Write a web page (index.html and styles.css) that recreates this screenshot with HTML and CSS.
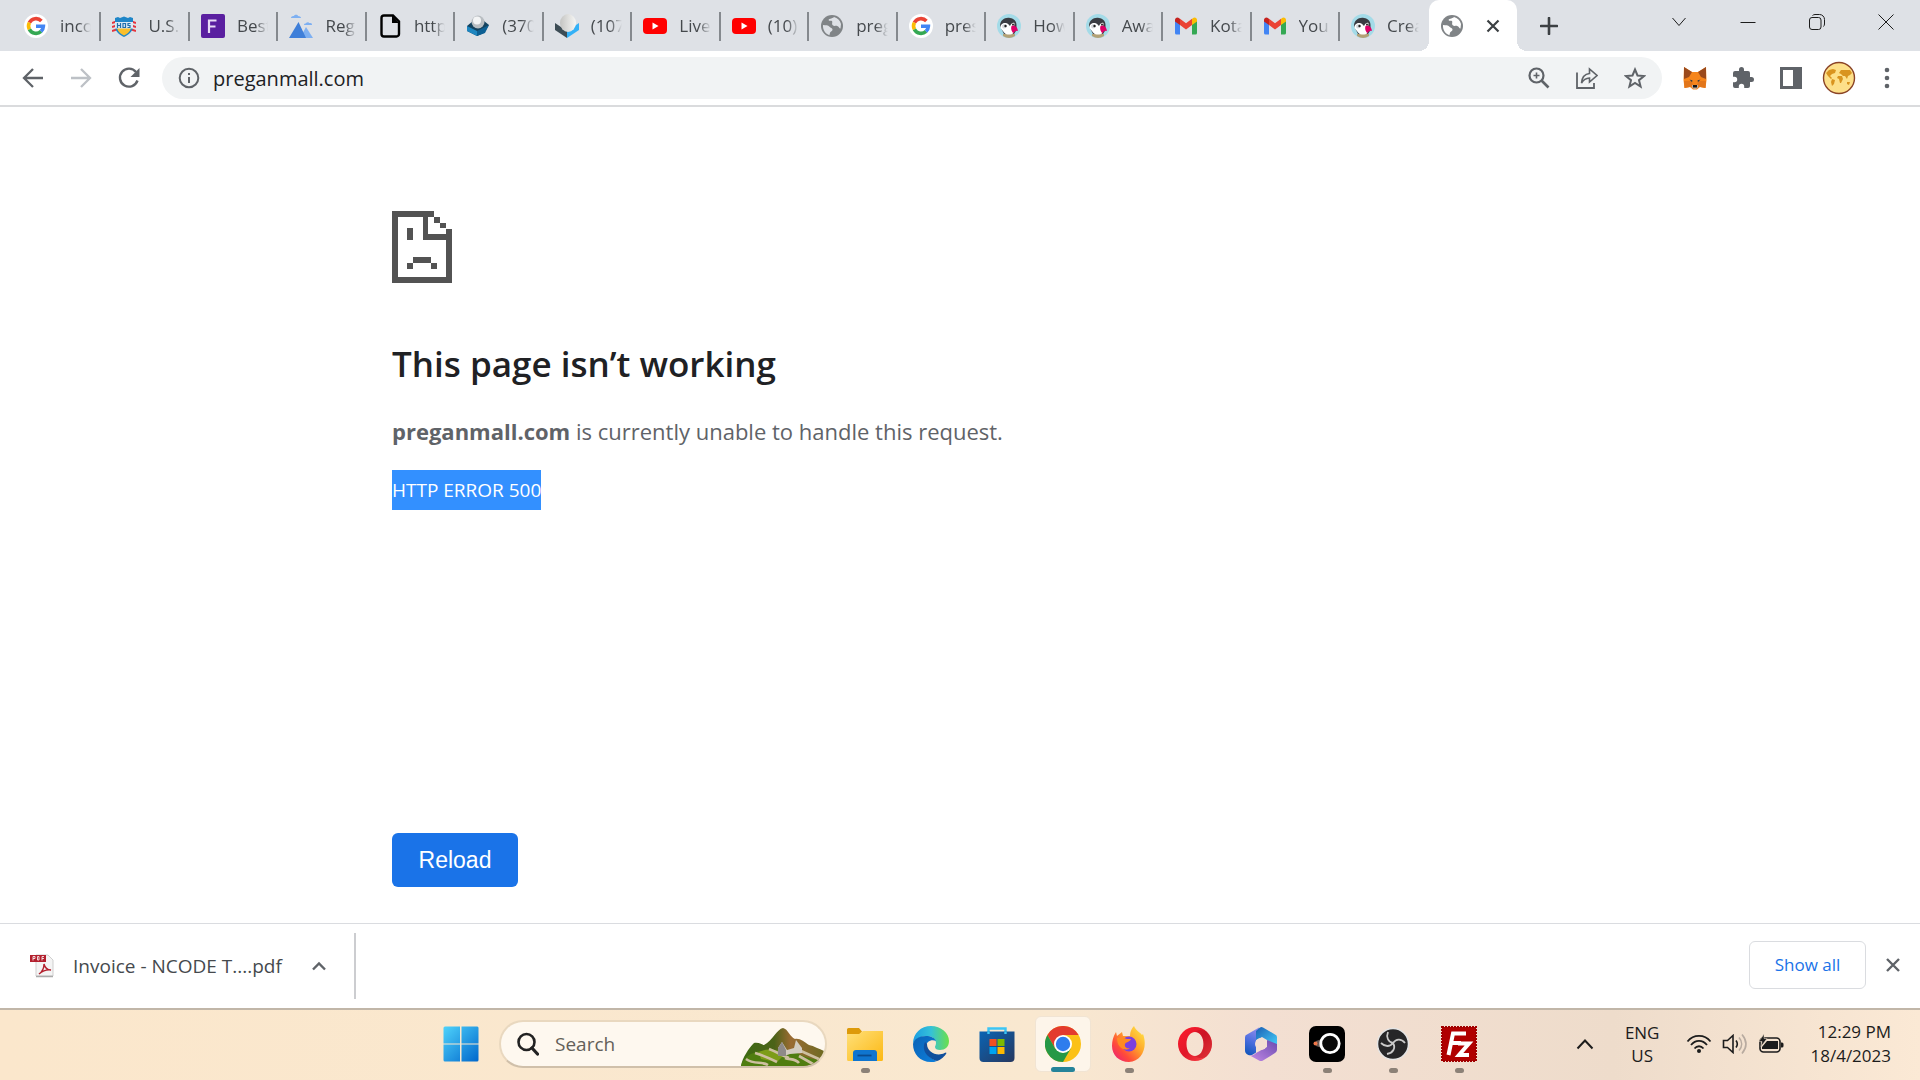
FILE: index.html
```html
<!DOCTYPE html>
<html lang="en">
  <head>
    <meta charset="UTF-8" />
    <meta name="viewport" content="width=device-width, initial-scale=1.0" />
    <title>preganmall.com</title>
    <link rel="stylesheet" href="styles.css">
  </head>
  <body>
    <!-- shared icons -->
    <svg class="defs" width="0" height="0">
      <defs>
        <linearGradient id="win" x1="0" y1="0" x2="1" y2="1">
          <stop offset="0" stop-color="#4fd3fb" />
          <stop offset="1" stop-color="#0067cc" />
        </linearGradient>
        <linearGradient id="folder" x1="0" y1="0" x2="1" y2="1">
          <stop offset="0" stop-color="#ffe07a" />
          <stop offset="1" stop-color="#fcb813" />
        </linearGradient>
        <linearGradient id="edge" x1="0" y1="0" x2="1" y2="0">
          <stop offset="0" stop-color="#1b9de2" />
          <stop offset="0.5" stop-color="#35c1d8" />
          <stop offset="1" stop-color="#6be04a" />
        </linearGradient>
        <linearGradient id="edge2" x1="0" y1="0" x2="1" y2="1">
          <stop offset="0" stop-color="#0a62b5" />
          <stop offset="1" stop-color="#0d7fdc" />
        </linearGradient>
        <linearGradient id="store" x1="0" y1="0" x2="1" y2="1">
          <stop offset="0" stop-color="#0a64b4" />
          <stop offset="1" stop-color="#27385f" />
        </linearGradient>
        <linearGradient id="fire" x1="1" y1="0" x2="0" y2="1">
          <stop offset="0" stop-color="#fff04a" />
          <stop offset="0.4" stop-color="#ffa62b" />
          <stop offset="0.7" stop-color="#ff4a3a" />
          <stop offset="1" stop-color="#e6158a" />
        </linearGradient>
        <linearGradient id="opera" x1="0" y1="0" x2="1" y2="1">
          <stop offset="0" stop-color="#ff1b2d" />
          <stop offset="0.5" stop-color="#e0182a" />
          <stop offset="1" stop-color="#ff4b4b" />
        </linearGradient>
        <linearGradient id="office1" x1="0.6" y1="0" x2="0.3" y2="1">
          <stop offset="0" stop-color="#8f8bea" />
          <stop offset="0.5" stop-color="#4d6fe0" />
          <stop offset="1" stop-color="#1457bd" />
        </linearGradient>
        <linearGradient id="office2" x1="0" y1="0" x2="1" y2="1">
          <stop offset="0" stop-color="#1a5fb4" />
          <stop offset="1" stop-color="#45d0fb" />
        </linearGradient>
        <linearGradient id="office3" x1="0" y1="1" x2="1" y2="0">
          <stop offset="0" stop-color="#c48ae6" />
          <stop offset="1" stop-color="#6a4bb0" />
        </linearGradient>
        <linearGradient id="hill" x1="0" y1="0" x2="1" y2="0">
          <stop offset="0" stop-color="#3d6b12" />
          <stop offset="0.4" stop-color="#4b6218" />
          <stop offset="0.6" stop-color="#9a6b32" />
          <stop offset="1" stop-color="#6e6a22" />
        </linearGradient>
        <linearGradient id="ball" x1="0" y1="0" x2="1" y2="0">
          <stop offset="0" stop-color="#c4c4c2" />
          <stop offset="0.5" stop-color="#dededc" />
          <stop offset="1" stop-color="#f6f6f4" />
        </linearGradient>
      </defs>
      <symbol id="google" viewBox="0 0 24 24">
        <circle cx="12" cy="12" r="12" fill="#fff" />
        <g fill="none" stroke-width="3.6">
          <path d="M5.4 8.6A7.4 7.4 0 0 1 17.4 7" stroke="#ea4335" />
          <path d="M5.4 15.4a7.4 7.4 0 0 1 0-6.8" stroke="#fbbc05" />
          <path d="M17 17.4a7.4 7.4 0 0 1-11.6-2" stroke="#34a853" />
          <path d="M12 12.2h7.4a7.4 7.4 0 0 1-2.4 5.2" stroke="#4285f4" />
        </g>
      </symbol>
      <symbol id="globe" viewBox="0 0 24 24">
        <circle cx="12" cy="12" r="11" fill="#808487" />
        <path d="M3 11c3 .4 5 0 6.500 1.800 1 1.400 2.800 1 3 2.600.2 1.800-2.300 1.800-2.500 3.600l-.6 2.200C5.500 20 2.600 16 3 11zM14 3c3.400.8 6.200 3.500 7 7l-.5 4.500c-1.500-.2-1.700-2.200-3.300-2.600-1.500-.4-3.200.6-4.400-.6-1.500-1.600.2-3.300-.9-4.300-1-.9-2.600.4-3.200-.8C8.200 4.600 12 5 14 3z" fill="var(--tab-bg)" />
      </symbol>
      <symbol id="youtube" viewBox="0 0 24 24">
        <rect x="0" y="4" width="24" height="16" rx="4" fill="#f00" />
        <path d="M9.500 8.500v7l6-3.500z" fill="#fff" />
      </symbol>
      <symbol id="gmail" viewBox="0 0 24 24">
        <path d="M1 6v13a1.500 1.500 0 0 0 1.500 1.500H6V10z" fill="#4285f4" />
        <path d="M23 6v13a1.500 1.500 0 0 1-1.500 1.500H18V10z" fill="#34a853" />
        <path d="M6 5v6L1 7.500V6c0-2.500 2.500-3.300 4-2z" fill="#c5221f" />
        <path d="M18 5v6l5-3.500V6c0-2.500-2.500-3.300-4-2z" fill="#fbbc04" />
        <path d="M6 4.800v6.200l6 4.500 6-4.500V4.800l-6 4.500z" fill="#ea4335" />
      </symbol>
      <symbol id="presta" viewBox="0 0 24 24">
        <circle cx="12" cy="12" r="12" fill="#a4dbe8" />
        <path d="M6 20h12v2c-4 2.500-8 2.500-12 0z" fill="#b3a176" />
        <path d="M3 12C3 6 8 3 13 4c4 .6 6.500 3 6.500 7v5L17 20H7z" fill="#3a3c42" />
        <path d="M3.500 14c-.5-4 3-5.500 5.500-5 2 .4 3 2 4 3 1-2 2.500-4 4.500-3l-1 10c-2 2-7 2-9 0z" fill="#fff" />
        <path d="M5 11.500c2-2 4-1.500 5 .5 0 2-3 3-4.500 2z" fill="#d5d8dc" />
        <path d="M14.500 12c3-1.500 6 1 6.500 5-2-.5-4 .5-4.500 2.500-2-2-3-5-2-7.500z" fill="#df0067" />
        <circle cx="8.500" cy="12" r="1.200" fill="#222" />
        <circle cx="16" cy="10.500" r="1" fill="#222" />
      </symbol>
    </svg>

    <div class="browser">
      <header class="tabbar">
        <nav class="tabs">
          <a class="tab" href="#"><svg class="favicon"><use href="#google" /></svg><span>inco</span></a>
          <a class="tab" href="#"><svg class="favicon" viewBox="0 0 24 24">
            <path d="M0 9l6-2M0 13l6-2M0 17l6-2M24 9l-6-2M24 13l-6-2M24 17l-6-2" stroke="#e5343d" stroke-width="2" />
            <path d="M3 4l3-1 2 1 4-1.500L16 4l2-1 3 1v8c0 6-5 9-9 11-4-2-9-5-9-11z" fill="#1f86c8" />
            <path d="M5 14h14c-1 4-4 6-7 7.500C9 20 6 18 5 14z" fill="#f9bf2c" />
            <path d="M3 8h18v6.500H3z" fill="#d9e9f5" />
            <path d="M5.500 9v5M8.500 9v5M5.500 11.500h3M11 9v5M11 9.500h2.500v4H11M18.500 9.500H16v2h2v2h-2.500" fill="none" stroke="#1f6fae" stroke-width="1.200" />
          </svg><span>U.S.</span></a>
          <a class="tab" href="#"><svg class="favicon" viewBox="0 0 24 24">
            <rect width="24" height="24" rx="2" fill="#5a1fa0" />
            <path d="M8 19V6.500h7.500M8 12.500h6.500" fill="none" stroke="#e8dcf6" stroke-width="2.200" />
          </svg><span>Best</span></a>
          <a class="tab" href="#"><svg class="favicon" viewBox="0 0 24 24">
            <path d="M11 24l6-11 7 11z" fill="#7eb0f2" />
            <path d="M0 24L9.500 8 17 24z" fill="#3f7fd9" />
            <path d="M2 4c0-2 3-2 3-2 1-2 4-1 4 0 2 0 3 1 3 2zM15 11c0-2 2-1 2-2 1-1 3-1 3 0 2 0 3 0 3 2z" fill="#7eb0f2" />
          </svg><span>Reg</span></a>
          <a class="tab" href="#"><svg class="favicon" viewBox="0 0 24 24">
            <path d="M6 1.500h9l6 6V20a2.500 2.500 0 0 1-2.500 2.500H6A2.500 2.500 0 0 1 3.500 20V4A2.500 2.500 0 0 1 6 1.500z" fill="none" stroke="#000" stroke-width="2.400" />
            <path d="M14 1v8h7z" />
          </svg><span>http</span></a>
          <a class="tab" href="#"><svg class="favicon" viewBox="0 0 24 24">
            <path d="M1 12l6-5h11l5 4-5 8-7 3-10-5z" fill="#15435f" />
            <path d="M1 12l10 5v5L1 17z" fill="#1e86c0" />
            <path d="M11 17l12-6-4 8-8 3z" fill="#0d6094" />
            <circle cx="12" cy="8" r="6.500" fill="#b9bec2" />
            <circle cx="11" cy="6.500" r="4" fill="#f3f4f5" />
          </svg><span>(370)</span></a>
          <a class="tab" href="#"><svg class="favicon" viewBox="0 0 24 24">
            <path d="M0 9l12 8v7L0 16z" fill="#3c4c55" />
            <path d="M24 9l-12 8v7l12-8z" fill="#33b1f7" />
            <ellipse cx="13" cy="9" rx="8" ry="9" fill="url(#ball)" />
          </svg><span>(107)</span></a>
          <a class="tab" href="#"><svg class="favicon"><use href="#youtube" /></svg><span>Live</span></a>
          <a class="tab" href="#"><svg class="favicon"><use href="#youtube" /></svg><span>(10)</span></a>
          <a class="tab" href="#"><svg class="favicon"><use href="#globe" /></svg><span>preg</span></a>
          <a class="tab" href="#"><svg class="favicon"><use href="#google" /></svg><span>pres</span></a>
          <a class="tab" href="#"><svg class="favicon"><use href="#presta" /></svg><span>How</span></a>
          <a class="tab" href="#"><svg class="favicon"><use href="#presta" /></svg><span>Awa</span></a>
          <a class="tab" href="#"><svg class="favicon"><use href="#gmail" /></svg><span>Kota</span></a>
          <a class="tab" href="#"><svg class="favicon"><use href="#gmail" /></svg><span>You</span></a>
          <a class="tab" href="#"><svg class="favicon"><use href="#presta" /></svg><span>Crea</span></a>
          <div class="tab active">
            <svg class="favicon"><use href="#globe" /></svg>
            <button class="icon-btn" aria-label="Close tab"><svg width="14" height="14" viewBox="0 0 14 14"><path d="M1.500 1.500l11 11M12.500 1.500l-11 11" stroke="#3c4043" stroke-width="2.200" /></svg></button>
          </div>
        </nav>
        <button class="new-tab icon-btn" aria-label="New tab"><svg width="18" height="18" viewBox="0 0 18 18"><path d="M9 1v16M1 9h16" stroke="#3c4043" stroke-width="2.600" stroke-linecap="round" /></svg></button>
        <div class="window-buttons">
          <button class="icon-btn" aria-label="Search tabs"><svg viewBox="0 0 16 16"><path d="M1.500 4l6.500 7.500L14.500 4" /></svg></button>
          <button class="icon-btn" aria-label="Minimize"><svg viewBox="0 0 16 16"><path d="M.5 8.500h15" /></svg></button>
          <button class="icon-btn" aria-label="Restore"><svg viewBox="0 0 16 16"><rect x=".5" y="3.500" width="11.500" height="12" rx="2.500" /><path d="M3.500 1.500C4 1 5 .5 6 .5h4.500a5 5 0 0 1 5 5V10c0 1-.5 2-1 2.500" /></svg></button>
          <button class="icon-btn" aria-label="Close"><svg viewBox="0 0 16 16"><path d="M.5.500l15 15M15.500.500l-15 15" /></svg></button>
        </div>
      </header>

      <div class="toolbar">
        <div class="nav-buttons">
          <button class="icon-btn" aria-label="Back"><svg width="22" height="22" viewBox="0 0 22 22"><path d="M21 11H2.500M11 2l-9 9 9 9" fill="none" stroke="#5f6368" stroke-width="2.300" /></svg></button>
          <button class="icon-btn" aria-label="Forward"><svg width="22" height="22" viewBox="0 0 22 22"><path d="M1 11h18.500M11 2l9 9-9 9" fill="none" stroke="#bdc1c6" stroke-width="2.300" /></svg></button>
          <button class="icon-btn" aria-label="Reload page"><svg width="22" height="22" viewBox="0 0 22 22"><path d="M19.500 13.500a9 9 0 1 1-1.500-8.500" fill="none" stroke="#5f6368" stroke-width="2.400" /><path d="M21.500 1v9h-9z" fill="#5f6368" /></svg></button>
        </div>
        <div class="omnibox">
          <svg width="22" height="22" viewBox="0 0 22 22"><circle cx="11" cy="11" r="9.300" fill="none" stroke="#5f6368" stroke-width="2" /><path d="M11 10v6M11 6v2" stroke="#5f6368" stroke-width="2" /></svg>
          <input type="text" aria-label="Address" value="preganmall.com" />
          <button class="icon-btn" aria-label="Zoom"><svg width="22" height="22" viewBox="0 0 22 22"><circle cx="8.500" cy="8.500" r="7" fill="none" stroke="#5f6368" stroke-width="2.200" /><path d="M13.500 13.500l7 7" stroke="#5f6368" stroke-width="2.600" /><path d="M8.500 5.500v6M5.500 8.500h6" stroke="#5f6368" stroke-width="1.600" /></svg></button>
          <button class="icon-btn" aria-label="Share"><svg width="22" height="22" viewBox="0 0 22 22"><path d="M1 5.500V21h17v-5" fill="none" stroke="#5f6368" stroke-width="1.800" /><path d="M5.500 16c.5-6 3.500-9 8-9.500V2l7.500 6.500-7.500 6.500v-4c-4 .2-6 1.500-8 5z" fill="none" stroke="#5f6368" stroke-width="1.600" /></svg></button>
          <button class="icon-btn" aria-label="Bookmark"><svg width="22" height="22" viewBox="0 0 22 22"><path d="M11 2.500l2.500 6 6.500.5-5 4.200 1.600 6.300L11 16l-5.600 3.500L7 13.200 2 9l6.500-.5z" fill="none" stroke="#5f6368" stroke-width="2" /></svg></button>
        </div>
        <div class="extensions">
          <button class="icon-btn" aria-label="MetaMask"><svg width="24" height="24" viewBox="0 0 24 24">
            <path d="M1 1l8 5h6l8-5 .5 13-1 8-5.500-1-3 2.500h-4L7 21l-5.500 1-1-8z" fill="#f6851b" />
            <path d="M1 1l8 5-3 5-5 2zM23 1l-8 5 3 5 5 2z" fill="#9b4a1c" />
            <path d="M1 15l8 0 1 5-3 1-5.500 1zM23 15l-8 0-1 5 3 1 5.500 1z" fill="#e2761b" />
            <path d="M6.500 13.500l3 1-.5 1.500zM17.500 13.500l-3 1 .5 1.500z" fill="#233447" />
            <path d="M9 19h6v2.500l-2 1.500h-2l-2-1.500z" fill="#c0ad9e" /><path d="M10 19h4v2.500h-4z" fill="#161616" />
          </svg></button>
          <button class="icon-btn" aria-label="Extensions"><svg width="24" height="24" viewBox="0 0 24 24"><path d="M20.500 11H19V7a2 2 0 0 0-2-2h-4V3.500a2.500 2.500 0 0 0-5 0V5H4a2 2 0 0 0-2 2v3.800h1.500a2.700 2.700 0 0 1 0 5.400H2V20a2 2 0 0 0 2 2h3.800v-1.500a2.700 2.700 0 0 1 5.400 0V22H17a2 2 0 0 0 2-2v-4h1.500a2.500 2.500 0 0 0 0-5z" fill="#5f6368" /></svg></button>
          <button class="icon-btn" aria-label="Side panel"><svg width="22" height="22" viewBox="0 0 22 22"><rect x="1.500" y="1.500" width="19" height="19" fill="none" stroke="#5f6368" stroke-width="3" /><path d="M13 1h8v20h-8z" fill="#5f6368" /></svg></button>
          <button class="icon-btn" aria-label="Profile"><svg width="34" height="34" viewBox="0 0 34 34">
            <circle cx="17" cy="17" r="15.500" fill="#fde08a" stroke="#8a4326" stroke-width="1.400" />
            <path d="M4 12l3-3 4-1 3 1-1 3-3 1-2 2 2 2-1 1-3-3zM10 18l3 1-1 4-2 2-1-4zM17 12l2-3 4 0 5 0 2 3-2 2-2 1-1 3-2-3-2 0-2-2zM16 15l4 0 1 3-2 4-1 0-1-4-2-1zM25 21l3 0-1 3-2-1z" fill="#d9941f" />
          </svg></button>
          <button class="icon-btn" aria-label="Menu"><svg width="6" height="22" viewBox="0 0 6 22"><g fill="#5f6368"><circle cx="3" cy="3" r="2.300" /><circle cx="3" cy="11" r="2.300" /><circle cx="3" cy="19" r="2.300" /></g></svg></button>
        </div>
      </div>

      <main class="error-page">
        <svg class="sad-file" viewBox="0 0 60 72" shape-rendering="crispEdges">
          <path d="M0 0h42v6h-6v17h18v-5h6v54H0zM6 6v60h48V29H31V6z" fill="#535353" fill-rule="evenodd" />
          <path d="M42 6h6v6h-6zM48 12h6v5h-6zM15 17h6v12h-6zM21 46h18v6H21zM15 52h6v6h-6zM39 52h6v6h-6z" fill="#535353" />
        </svg>
        <h1>This page isn’t working</h1>
        <p><strong>preganmall.com</strong> is currently unable to handle this request.</p>
        <div class="error-code">HTTP ERROR 500</div>
        <button class="reload">Reload</button>
      </main>

      <footer class="downloads">
        <div class="download">
          <svg width="24" height="24" viewBox="0 0 24 24">
            <path d="M6 1h12l5 5v16H6z" fill="#f4f4f4" stroke="#cfcfcf" />
            <path d="M6 22.500h17" stroke="#aaa" stroke-width="1.500" />
            <rect y="1" width="16" height="7" fill="#b3202e" />
            <path d="M3 6.500v-4h2v2H3M7.500 2.500h1.500v3.500H7.500zM12 6.500v-4h2M12 4.500h2" fill="none" stroke="#fff" stroke-width=".8" />
            <path d="M9 20c3-2 5-6 5-10 1 4 3 6 7 6-4-.5-8 .5-12 4z" fill="none" stroke="#b3202e" stroke-width="1.400" />
          </svg>
          <a href="#">Invoice - NCODE T....pdf</a>
          <button class="icon-btn" aria-label="Download options"><svg width="14" height="10" viewBox="0 0 14 10"><path d="M1 8.500l6-6 6 6" fill="none" stroke="#5f6368" stroke-width="2.400" /></svg></button>
        </div>
        <div class="shelf-actions">
          <button class="show-all">Show all</button>
          <button class="icon-btn" aria-label="Close downloads"><svg width="16" height="16" viewBox="0 0 16 16"><path d="M2 2l12 12M14 2L2 14" stroke="#5f6368" stroke-width="2.400" /></svg></button>
        </div>
      </footer>
    </div>

    <div class="taskbar">
      <div class="apps">
        <button class="app start" aria-label="Start"><svg viewBox="0 0 36 36"><path d="M2 .5h15v17H.5V2A1.500 1.500 0 0 1 2 .5zM18.500.5h15A1.500 1.500 0 0 1 35.500 2v15.500h-17zM.5 18.500H17v17H2A1.500 1.500 0 0 1 .5 34zM18.500 18.500h17V34a1.500 1.500 0 0 1-1.500 1.500H18.500z" fill="url(#win)" /></svg></button>
        <label class="search">
          <svg width="22" height="24" viewBox="0 0 22 24"><circle cx="9.500" cy="10" r="8" fill="none" stroke="#222" stroke-width="2.600" /><path d="M15 16l5.500 6" stroke="#222" stroke-width="3.200" stroke-linecap="round" /></svg>
          <input type="text" placeholder="Search" aria-label="Search" />
          <svg class="landscape" width="84" height="38" viewBox="0 0 84 38">
            <path d="M0 38c1-8 8-18 13-23 5-1 8 2 10 2C32 12 36 1 42 0c5 1 7 9 12 11 5-1 9 3 14 6 5 1 10 4 15 6-1 7-5 12-11 15z" fill="url(#hill)" />
            <path d="M0 38c2-8 10-14 20-15 14-1 28-4 40 4 8 4 14 4 18 5-2 3-4 5-6 6z" fill="#4f7d10" />
            <path d="M18 24c8-4 18-3 26 2l-8 8-16-3z" fill="#7d9c18" />
            <path d="M5 31c8 6 16 2 22 6M14 25c10 3 14 5 22 9M28 21c8 3 12 6 20 9M44 30c5 2 10 0 14 5M60 23l20 9M58 28l14 8" fill="none" stroke="#cdbfa0" stroke-width="2.600" />
            <path d="M37 28V20l4-6 5 8 7-2 2-8 6 8v5l-12 1-6 2z" fill="#d3ccc0" />
            <path d="M37 28V20l4-6 4 8v6z" fill="#8e8a88" />
          </svg>
        </label>
        <button class="app running" aria-label="File Explorer"><svg viewBox="0 0 36 36"><path d="M0 3.500A1.500 1.500 0 0 1 1.500 2H12l3 3.500L12 9H0z" fill="#dd9a0a" /><path d="M0 8h12l4-3h20v28.500A1.500 1.500 0 0 1 34.500 35h-33A1.500 1.500 0 0 1 0 33.500z" fill="url(#folder)" /><path d="M6 35V27a3 3 0 0 1 3-3h18a3 3 0 0 1 3 3v8z" fill="#0f75cf" /><path d="M10.500 29.500h14" stroke="#0a4b8f" stroke-width="1.800" /></svg></button>
        <button class="app" aria-label="Edge"><svg viewBox="0 0 36 36">
          <path d="M0 18C0 7 8 0 18 0s18 7 18 15c0 6-4 9-9 9-3 0-5-1-5-3 0-1 1-2 1-4 0-4-4-7-9-7C7 10 1 14 0 18z" fill="url(#edge)" />
          <path d="M0 18c1-5 6-8 13-8 5 0 9 2 10 5-5-2-10 1-10 6 0 6 4 12 11 14-2 1-4 1-6 1C7 36 0 28 0 18z" fill="url(#edge2)" />
          <path d="M12 16c-4 9 3 16 12 19 4-1 8-5 9.500-8-.5-1-1-.5-2 0C24 31 14 26 14 18z" fill="#114f9c" />
        </svg></button>
        <button class="app" aria-label="Store"><svg viewBox="0 0 36 36"><path d="M9.500 8V2.500h17V8" fill="none" stroke="#3cc5f5" stroke-width="2.400" /><path d="M.5 5.500h35V32a4 4 0 0 1-4 4h-27a4 4 0 0 1-4-4z" fill="url(#store)" /><path d="M9.500 5.500V8M26.500 5.500V8" stroke="#3cc5f5" stroke-width="2.400" /><path d="M10.500 13h7v7h-7z" fill="#f25022" /><path d="M18.500 13h7v7h-7z" fill="#7fba00" /><path d="M10.500 21h7v7h-7z" fill="#00a4ef" /><path d="M18.500 21h7v7h-7z" fill="#ffb900" /></svg></button>
        <button class="app current" aria-label="Chrome"><svg viewBox="0 0 36 36"><circle cx="18" cy="18" r="18" fill="#fbc116" /><path d="M18 9h15.600A18 18 0 0 0 2.400 9l7.800 13.500z" fill="#e33b2e" /><path d="M2.400 9A18 18 0 0 0 18 36l7.800-13.500L18 27l-7.800-4.500z" fill="#269847" /><circle cx="18" cy="18" r="9" fill="#fff" /><circle cx="18" cy="18" r="7.200" fill="#2f7ded" /></svg></button>
        <button class="app running" aria-label="Firefox"><svg viewBox="0 0 36 36"><path d="M1 20c0-5 1-9 4-14l1 4 5-4 1 4h7c0-5 2-8 4-10 2 5 6 6 8 9l1-1c5 13-1 28-14 28C8 36 1 29 1 20z" fill="url(#fire)" /><circle cx="18" cy="18" r="7.500" fill="#7b3fe0" /><path d="M6 12c5-2 7 0 10 1l4 0c-1 3-5 3-6 5-1 3 2 5 5 4-5 4-13 0-13-10z" fill="#ff8a22" /></svg></button>
        <button class="app" aria-label="Opera"><svg viewBox="0 0 36 36"><path d="M18 1a17 17 0 1 0 0 34 17 17 0 1 0 0-34zm0 5c5 0 8.500 5 8.500 12S23 30 18 30 9.500 25 9.500 18 13 6 18 6z" fill="url(#opera)" fill-rule="evenodd" /><path d="M18 6c4-3 8-2 11-1 8 7 8 19 0 26-3 1-7 2-11-1 5 0 8.500-5 8.500-12S23 6 18 6z" fill="#a8121c" opacity=".35" /></svg></button>
        <button class="app" aria-label="Microsoft 365"><svg viewBox="0 0 36 36">
          <path d="M16 1.500L4 8.500a3 3 0 0 0-2 3v13c0 4 5 6 8 4l3-2V14l5-3z" fill="url(#office1)" />
          <path d="M13 14V5l4-3.500a3 3 0 0 1 3 0L32 8.500a3 3 0 0 1 2 3V20l-10-6-5-3z" fill="url(#office2)" />
          <path d="M34 18v6a4 4 0 0 1-2 3l-12 7.500a4 4 0 0 1-4 0L6 29c3 1 5 0 7-2l11-6V14z" fill="url(#office3)" />
          <circle cx="18" cy="18" r="6" fill="#f3dfd3" />
        </svg></button>
        <button class="app running" aria-label="Webcam"><svg viewBox="0 0 36 36"><rect width="36" height="36" rx="7" /><path d="M7 15l6-2v9l-6-2z" fill="#6b5a55" /><circle cx="6.500" cy="17.500" r="2" fill="#f0784a" /><circle cx="21" cy="17.500" r="9.200" fill="#0a0a0a" stroke="#fff" stroke-width="2.800" /></svg></button>
        <button class="app running" aria-label="OBS"><svg viewBox="0 0 36 36"><circle cx="18" cy="18" r="15.500" fill="#262628" stroke="#e5e5e5" stroke-width="1.500" /><path d="M13 6c-2 5 0 10 5 11 3-4 8-5 12 0M18 17c3 5 0 10-6 11M18 17c-3 4-8 4-12 0" fill="none" stroke="#c9c9c9" stroke-width="1.800" /></svg></button>
        <button class="app running" aria-label="FileZilla"><svg viewBox="0 0 36 36"><rect x="1" y="1" width="34" height="34" fill="#b00000" stroke="#a00000" stroke-width="2" stroke-dasharray="2 1" /><path d="M7.500 29L12 7.500h13M10 17h10M17 17.500h11L18 29h10" fill="none" stroke="#fff" stroke-width="4" /></svg></button>
      </div>
      <div class="tray">
        <button class="icon-btn" aria-label="Hidden icons"><svg width="18" height="12" viewBox="0 0 18 12"><path d="M1.500 10.500L9 2.500l7.500 8" fill="none" stroke="#1c1c1c" stroke-width="2" /></svg></button>
        <button class="language">ENG<br />US</button>
        <div class="status">
          <svg width="26" height="20" viewBox="0 0 26 20" fill="none" stroke="#1c1c1c" stroke-width="1.800"><path d="M1.500 7.500c6-7.500 17-7.500 23 0M5 11c4.500-5.500 11.500-5.500 16 0M8.500 14.500c2.500-3 6.500-3 9 0" /><circle cx="13" cy="17" r="2" fill="#1c1c1c" stroke="none" /></svg>
          <svg width="26" height="20" viewBox="0 0 26 20" fill="none" stroke="#1c1c1c" stroke-width="1.600"><path d="M1.500 6.500h4L11 1.500v17l-5.500-5h-4zM14 6.500c1.500 2 1.500 5 0 7" /><path d="M17 3.500c3.500 4 3.500 9 0 13M20 .500c5 6 5 13 0 19" stroke="#b8aba0" /></svg>
          <svg width="26" height="20" viewBox="0 0 26 20"><rect x="2" y="4" width="20" height="14" rx="3.500" fill="none" stroke="#1c1c1c" stroke-width="1.600" /><path d="M9 7h11v8H4v-2zM23 8.500h1a1.500 1.500 0 0 1 1.500 1.500v2a1.500 1.500 0 0 1-1.500 1.500h-1z" fill="#1c1c1c" /><path d="M6 0L1 7.500h3l-1 5 6-8H6z" fill="#1c1c1c" stroke="#eedccb" stroke-width=".5" /></svg>
        </div>
        <div class="clock">12:29 PM<br />18/4/2023</div>
      </div>
    </div>
  </body>
</html>
```

FILE: styles.css
```css
* {
  box-sizing: border-box;
}
body {
  --tab-bg: #dee1e6;
  margin: 0;
  height: 100vh;
  display: flex;
  flex-direction: column;
  font-family: "Open Sans", "Noto Sans", sans-serif;
  color: #202124;
  background: #fff;
}
svg {
  display: block;
  flex: none;
}
button,
input {
  font-family: inherit;
  border: none;
  background: none;
  padding: 0;
}
.defs {
  position: absolute;
}
.icon-btn {
  display: flex;
  align-items: center;
  justify-content: center;
}
.browser {
  flex: 1;
  display: flex;
  flex-direction: column;
}

/* tabs */
.tabbar {
  display: flex;
  height: 51px;
  padding-left: 13px;
  background: #dee1e6;
}
.tabs {
  flex: 1;
  min-width: 0;
  display: flex;
}
.tab {
  flex: 1 1 0;
  min-width: 0;
  display: flex;
  align-items: center;
  gap: 12px;
  padding: 0 10px 0 11px;
  color: #45494d;
  font-size: 17px;
  text-decoration: none;
  background: linear-gradient(#85898e, #85898e) right 12px / 2px 29px no-repeat;
}
.tab:nth-child(16) {
  background: none;
}
.tab span {
  flex: 1;
  min-width: 0;
  overflow: hidden;
  white-space: nowrap;
  -webkit-mask-image: linear-gradient(to right, #000 60%, transparent);
  mask-image: linear-gradient(to right, #000 60%, transparent);
}
.favicon {
  width: 24px;
  height: 24px;
}
.tab.active {
  --tab-bg: #fff;
  position: relative;
  justify-content: space-between;
  background: #fff;
  border-radius: 10px 10px 0 0;
}
.tab.active button {
  margin-right: 7px;
}
.tab.active::before,
.tab.active::after {
  content: "";
  position: absolute;
  bottom: 0;
  width: 10px;
  height: 10px;
}
.tab.active::before {
  left: -10px;
  background: radial-gradient(circle at 0 0, #dee1e6 10px, #fff 10px);
}
.tab.active::after {
  right: -10px;
  background: radial-gradient(circle at 100% 0, #dee1e6 10px, #fff 10px);
}
.new-tab {
  flex: none;
  width: 64px;
  margin-right: 63px;
}
.window-buttons {
  flex: none;
  display: flex;
  height: 43px;
}
.window-buttons button {
  width: 69px;
}
.window-buttons svg {
  width: 16px;
  height: 16px;
  fill: none;
  stroke: #1c1c1c;
}

/* toolbar */
.toolbar {
  display: flex;
  align-items: center;
  height: 56px;
  border-bottom: 2px solid #dadbdd;
}
.nav-buttons {
  display: flex;
  gap: 26px;
  width: 162px;
  padding-left: 22px;
}
.omnibox {
  flex: 1;
  display: flex;
  align-items: center;
  gap: 26px;
  height: 42px;
  padding: 0 16px;
  border-radius: 21px;
  background: #f1f3f4;
}
.omnibox input {
  flex: 1;
  min-width: 0;
  height: 40px;
  margin-left: -13px;
  font-size: 20px;
  color: #202124;
}
.extensions {
  display: grid;
  grid-template-columns: repeat(5, 48px);
  padding: 0 9px;
}

/* error page */
.error-page {
  flex: 1;
  display: flex;
  flex-direction: column;
  align-items: flex-start;
  width: 100%;
  max-width: 1136px;
  margin: 0 auto;
  padding: 104px 0 36px;
  color: #5f6368;
}
.sad-file {
  width: 60px;
  height: 72px;
}
h1 {
  margin: 58px 0 0;
  font-size: 35px;
  line-height: 46px;
  font-weight: 600;
  color: #202124;
}
.error-page p {
  margin: 26px 0 0;
  font-size: 22px;
  line-height: 36px;
}
.error-code {
  margin-top: 21px;
  font-size: 19px;
  line-height: 40px;
  color: #fff;
  background: #3390ff;
}
.reload {
  width: 126px;
  height: 54px;
  margin-top: auto;
  border-radius: 6px;
  font-family: "Liberation Sans", Arial, sans-serif;
  font-size: 23px;
  color: #fff;
  background: #1a73e8;
}

/* downloads */
.downloads {
  display: flex;
  align-items: center;
  justify-content: space-between;
  height: 85px;
  border-top: 1px solid #dadce0;
}
.download {
  display: flex;
  align-items: center;
  width: 356px;
  height: 66px;
  padding-left: 30px;
  border-right: 2px solid #cccdd0;
}
.download a {
  flex: 1;
  margin-left: 19px;
  font-size: 19px;
  color: #45494d;
  text-decoration: none;
  white-space: nowrap;
}
.download button {
  margin-right: 28px;
}
.shelf-actions {
  display: flex;
  align-items: center;
  gap: 19px;
  padding: 0 19px 2px 0;
}
.show-all {
  width: 117px;
  height: 48px;
  padding-bottom: 2px;
  border: 1px solid #dadce0;
  border-radius: 6px;
  font-size: 17px;
  font-weight: 500;
  color: #1a73e8;
}

/* taskbar */
.taskbar {
  display: flex;
  justify-content: space-between;
  height: 72px;
  padding-bottom: 2px;
  border-top: 2px solid #c1b6a8;
  background: linear-gradient(to right, #fbe7cc, #f9e8d0 55%, #f3dfd2 66%, #eedccb 84%, #fbe9d5);
}
.apps {
  display: flex;
  align-items: center;
  gap: 10px;
  margin-left: 432px;
}
.app {
  position: relative;
  width: 56px;
  height: 56px;
  display: flex;
  align-items: center;
  justify-content: center;
  border-radius: 6px;
}
.app svg {
  width: 36px;
  height: 36px;
}
.current {
  background: #fdf5ea;
  border: 1px solid #f1e4d3;
}
.running::after,
.current::after {
  content: "";
  position: absolute;
  bottom: -1px;
  width: 9px;
  height: 5px;
  border-radius: 3px;
  background: #8c8177;
}
.current::after {
  width: 24px;
  background: #25849a;
}
.search {
  display: flex;
  align-items: center;
  width: 328px;
  height: 48px;
  padding-left: 16px;
  border: 2px solid #e9d8bf;
  border-bottom-color: #d0c0aa;
  border-radius: 24px;
  background: #fef8ef;
  overflow: hidden;
}
.search input {
  flex: 1;
  min-width: 0;
  margin-left: 16px;
  font-size: 19px;
}
.search input::placeholder {
  color: #646059;
}
.landscape {
  margin-top: 6px;
}
.start {
  width: 57px;
}
.tray {
  display: flex;
  align-items: center;
  margin-right: 29px;
  font-size: 17px;
  line-height: 24px;
  color: #1c1c1c;
}
.language {
  margin: 0 27px 0 31px;
  font-size: 17px;
  line-height: 23px;
  color: #1c1c1c;
}
.status {
  display: flex;
  gap: 10px;
}
.clock {
  margin-left: 26px;
  text-align: right;
}
```
